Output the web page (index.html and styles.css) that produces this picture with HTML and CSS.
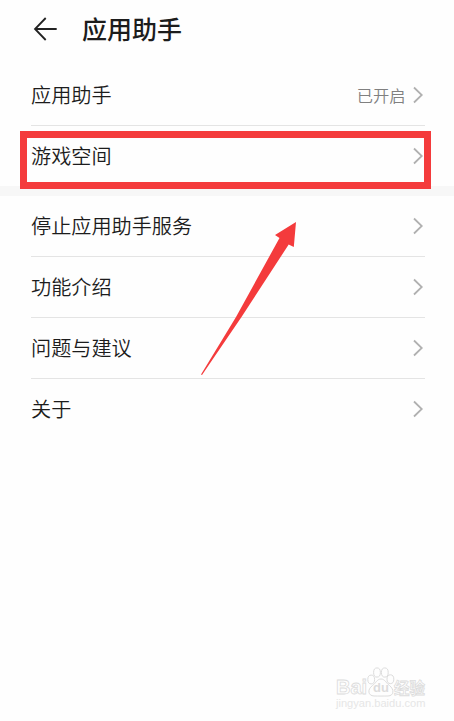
FILE: index.html
```html
<!DOCTYPE html>
<html lang="zh-CN">
<head>
    <meta charset="UTF-8">
    <meta name="viewport" content="width=device-width, initial-scale=1.0">
    <title>应用助手</title>
    <link rel="stylesheet" href="styles.css">
</head>
<body>

<div class="page">
    <header class="header">
        <svg class="back" width="24" height="24" viewBox="0 0 24 24">
            <path d="M12.7 1 L2 12 L12.7 23 M2 12 H23.7"/>
        </svg>
        <h1>应用助手</h1>
    </header>

    <div class="list">
        <div class="row">
            <span class="label">应用助手</span>
            <span class="status">已开启</span>
            <svg class="chevron" width="10" height="18" viewBox="0 0 10 18"><path d="M1 1.5 L8.8 9 L1 16.5"/></svg>
        </div>
        <div class="row">
            <span class="label">游戏空间</span>
            <svg class="chevron" width="10" height="18" viewBox="0 0 10 18"><path d="M1 1.5 L8.8 9 L1 16.5"/></svg>
        </div>
    </div>

    <div class="divider"></div>

    <div class="list">
        <div class="row">
            <span class="label">停止应用助手服务</span>
            <svg class="chevron" width="10" height="18" viewBox="0 0 10 18"><path d="M1 1.5 L8.8 9 L1 16.5"/></svg>
        </div>
        <div class="row">
            <span class="label">功能介绍</span>
            <svg class="chevron" width="10" height="18" viewBox="0 0 10 18"><path d="M1 1.5 L8.8 9 L1 16.5"/></svg>
        </div>
        <div class="row">
            <span class="label">问题与建议</span>
            <svg class="chevron" width="10" height="18" viewBox="0 0 10 18"><path d="M1 1.5 L8.8 9 L1 16.5"/></svg>
        </div>
        <div class="row">
            <span class="label">关于</span>
            <svg class="chevron" width="10" height="18" viewBox="0 0 10 18"><path d="M1 1.5 L8.8 9 L1 16.5"/></svg>
        </div>
    </div>

    <!-- marks over the list -->
    <div class="highlight"></div>
    <svg class="arrow" width="98" height="156" viewBox="0 0 98 156">
        <path d="M96 2 L75 15 L79.5 18 L36 97 L1 154.5 L2 155 L41.5 97 L88.7 24.5 L93.8 27 Z"/>
    </svg>

    <div class="watermark">
        <div class="brand">
            <span class="bai">Bai</span>
            <span class="paw">
                <svg width="28" height="30" viewBox="0 0 28 30">
                    <ellipse cx="4.2" cy="12.5" rx="3.4" ry="4.4"/>
                    <ellipse cx="10" cy="5.5" rx="3.4" ry="4.6"/>
                    <ellipse cx="17.8" cy="5.5" rx="3.4" ry="4.6"/>
                    <ellipse cx="23.4" cy="12.2" rx="3.4" ry="4.4"/>
                    <path d="M14 12 C10 12 9 16 5.5 18.5 C0 22.5 1 28.8 7 29 C11 29.1 17 29.1 21 29 C27 28.8 27.5 22.5 22.5 18.5 C19 16 18 12 14 12 Z"/>
                </svg>
                <span class="du">du</span>
            </span>
            <span class="jingyan">经验</span>
        </div>
        <div class="url">jingyan.baidu.com</div>
    </div>
</div>

</body>
</html>
```

FILE: styles.css
```css
body {
    margin: 0;
    background: #fefefe;
    color: #1c1c1c;
    font-family: "Noto Sans CJK SC", sans-serif;
}
.page {
    position: relative;
    height: 721px;
    overflow: hidden;
}
.header {
    display: flex;
    align-items: center;
    height: 58px;
    padding: 0 33px 7px;
}
.back {
    fill: none;
    stroke: #222;
    stroke-width: 1.8;
}
h1 {
    margin: 0 0 2px 25px;
    font-size: 25px;
    font-weight: 500;
    line-height: 36px;
}
.list {
    padding: 0 29px 0 31px;
}
.row {
    display: flex;
    align-items: center;
    height: 60px;
    border-bottom: 1px solid #e4e4e4;
}
.row:last-child {
    border-bottom: none;
}
.label {
    flex: 1;
    font-size: 20.15px;
    font-weight: 350;
    line-height: 30px;
}
.status {
    margin-right: 7px;
    color: #808080;
    font-size: 16.3px;
    font-weight: 350;
    line-height: 24px;
}
.chevron {
    margin-right: 2.5px;
    fill: none;
    stroke: #b0b0b0;
    stroke-width: 1.8;
}
.divider {
    height: 10px;
    background: #f7f7f7;
}
.highlight {
    position: absolute;
    left: 20px;
    top: 131px;
    width: 397px;
    height: 44px;
    border: 7px solid #f43b3c;
}
.arrow {
    position: absolute;
    left: 200px;
    top: 220px;
    fill: #f43b3c;
}
.watermark {
    position: absolute;
    left: 336px;
    top: 667px;
    width: 92px;
    color: #fefefe;
    font-family: "Liberation Sans", "Noto Sans CJK SC", sans-serif;
    -webkit-text-stroke: 0.8px #dcdcdc;
}
.brand {
    display: flex;
    align-items: flex-end;
    height: 30px;
}
.bai {
    width: 31px;
    font-size: 20px;
    font-weight: bold;
    line-height: 20px;
}
.paw {
    position: relative;
    width: 27px;
    height: 30px;
}
.paw svg {
    fill: #fefefe;
    stroke: #dcdcdc;
}
.du {
    position: absolute;
    left: 6px;
    top: 13px;
    color: #dcdcdc;
    font-size: 13px;
    font-weight: bold;
    line-height: 15px;
    -webkit-text-stroke: 0;
}
.jingyan {
    font-size: 15.5px;
    font-weight: bold;
    line-height: 16px;
}
.url {
    color: #e6e6e6;
    font-size: 11.1px;
    line-height: 13px;
    white-space: nowrap;
    -webkit-text-stroke: 0;
}
```
